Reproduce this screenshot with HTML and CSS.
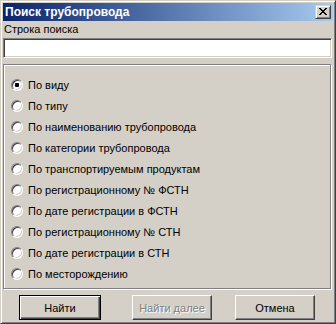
FILE: index.html
```html
<!DOCTYPE html>
<html lang="ru">
<head>
<meta charset="utf-8">
<title>Поиск трубопровода</title>
<link rel="stylesheet" href="styles.css">
</head>
<body>
<div class="window">
  <div class="titlebar">
    <span class="title">Поиск трубопровода</span>
    <span class="close"><svg width="8" height="7" viewBox="0 0 8 7" shape-rendering="crispEdges"><path d="M0 0h2v1h-2zM6 0h2v1h-2zM1 1h2v1h-2zM5 1h2v1h-2zM2 2h4v1h-4zM3 3h2v1h-2zM2 4h4v1h-4zM1 5h2v1h-2zM5 5h2v1h-2zM0 6h2v1h-2zM6 6h2v1h-2z" fill="#000"/></svg></span>
  </div>
  <div class="label">Строка поиска</div>
  <div class="input"></div>
  <div class="group">
    <div class="row"><span class="radio checked"><span class="dot"></span></span><span>По виду</span></div>
    <div class="row"><span class="radio"></span><span>По типу</span></div>
    <div class="row"><span class="radio"></span><span>По наименованию трубопровода</span></div>
    <div class="row"><span class="radio"></span><span>По категории трубопровода</span></div>
    <div class="row"><span class="radio"></span><span>По транспортируемым продуктам</span></div>
    <div class="row"><span class="radio"></span><span>По регистрационному № ФСТН</span></div>
    <div class="row"><span class="radio"></span><span>По дате регистрации в ФСТН</span></div>
    <div class="row"><span class="radio"></span><span>По регистрационному № СТН</span></div>
    <div class="row"><span class="radio"></span><span>По дате регистрации в СТН</span></div>
    <div class="row"><span class="radio"></span><span>По месторождению</span></div>
  </div>
  <div class="buttons">
    <div class="btn default">Найти</div>
    <div class="btn disabled next">Найти далее</div>
    <div class="btn cancel">Отмена</div>
  </div>
</div>
</body>
</html>
```

FILE: styles.css
```css
* { box-sizing: border-box; }
html, body { margin: 0; padding: 0; }
body {
  width: 336px;
  height: 324px;
  background: #d4d0c8;
  font-family: "Liberation Sans", Arial, sans-serif;
  font-size: 11px;
  color: #000;
}
.window {
  width: 336px;
  height: 324px;
  border: 1px solid;
  border-color: #d4d0c8 #404040 #404040 #d4d0c8;
  box-shadow: inset 1px 1px #fff, inset -1px -1px #808080;
  padding: 2px 3px 3px 2px;
  display: flex;
  flex-direction: column;
  background: #d4d0c8;
}
.titlebar {
  height: 18px;
  margin-right: -1px;
  background: linear-gradient(to right, #0a246a, #a6caf0);
  display: flex;
  align-items: center;
  justify-content: space-between;
  padding: 0 2px 0 2px;
}
.title {
  color: #fff;
  font-weight: bold;
  font-size: 12px;
  line-height: 14px;
}
.close {
  width: 16px;
  height: 14px;
  background: #d4d0c8;
  border: 1px solid;
  border-color: #d4d0c8 #404040 #404040 #d4d0c8;
  box-shadow: inset 1px 1px #fff, inset -1px -1px #808080;
  display: flex;
  padding: 2px 0 0 3px;
}
.label {
  margin-top: 2px;
  height: 13px;
  line-height: 13px;
  padding-left: 1px;
}
.input {
  margin-top: 2px;
  height: 20px;
  background: #fff;
  border: 1px solid;
  border-color: #808080 #fff #fff #808080;
  box-shadow: inset 1px 1px #404040, inset -1px -1px #d4d0c8;
}
.group {
  margin-top: 6px;
  width: 328px;
  height: 225px;
  border: 1px solid #808080;
  box-shadow: inset 1px 1px #fff, 1px 1px 0 #fff;
  padding: 9px 0 0 7px;
  display: flex;
  flex-direction: column;
}
.row {
  height: 21px;
  display: flex;
  align-items: center;
}
.radio {
  width: 12px;
  height: 12px;
  border-radius: 50%;
  border: 1px solid;
  border-color: #808080 #fff #fff #808080;
  background: #fff;
  box-shadow: inset 1px 1px #404040, inset -1px -1px #d4d0c8;
  margin-right: 5px;
  display: flex;
  align-items: center;
  justify-content: center;
  flex: none;
}
.dot {
  width: 4px;
  height: 4px;
  border-radius: 1px;
  background: #000;
}
.buttons {
  margin-top: 6px;
  display: flex;
  padding-left: 16px;
}
.btn {
  height: 25px;
  width: 80px;
  display: flex;
  align-items: center;
  justify-content: center;
  border: 1px solid;
  border-color: #fff #404040 #404040 #fff;
  box-shadow: inset -1px -1px #808080;
  background: #d4d0c8;
}
.btn.default {
  width: 82px;
  border: 1px solid #000;
  box-shadow: inset 1px 1px #fff, inset -1px -1px #404040, inset -2px -2px #808080;
}
.btn.next { margin-left: 31px; }
.btn.cancel { margin-left: 23px; }
.btn.disabled {
  color: #808080;
  text-shadow: 1px 1px 0 #fff;
}
```
